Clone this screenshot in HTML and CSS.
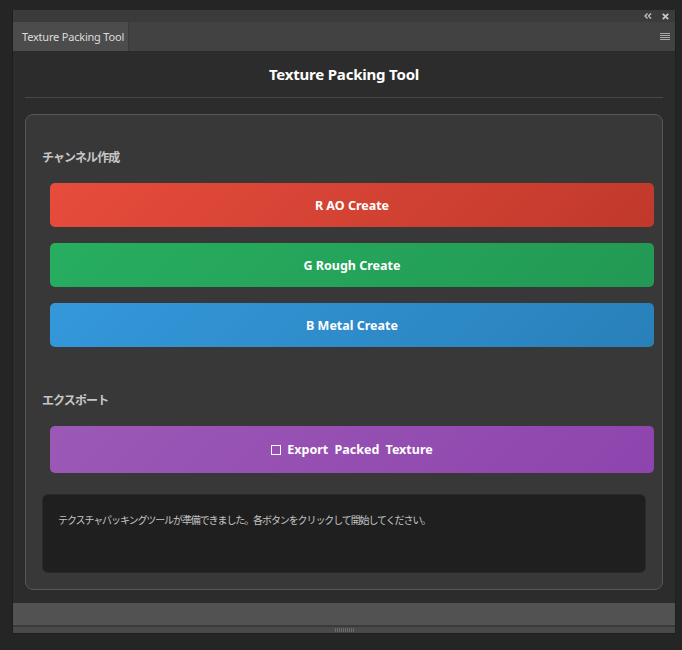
FILE: index.html
```html
<!DOCTYPE html>
<html lang="ja">
<head>
<meta charset="utf-8">
<title>Texture Packing Tool</title>
<link rel="stylesheet" href="styles.css">
</head>
<body>
<div class="panel">
  <div class="topbar">
    <svg class="ico-collapse" width="8" height="6" viewBox="0 0 8 6"><path d="M3.5 0.5 L1 3 L3.5 5.5 M7 0.5 L4.5 3 L7 5.5" fill="none" stroke="#c8c8c8" stroke-width="1.3"/></svg>
    <svg class="ico-close" width="7" height="7" viewBox="0 0 7 7"><path d="M0.8 0.8 L6.2 6.2 M6.2 0.8 L0.8 6.2" fill="none" stroke="#c8c8c8" stroke-width="1.8"/></svg>
  </div>
  <div class="tabrow">
    <div class="tab">Texture Packing Tool</div>
    <svg class="ico-menu" width="10" height="8" viewBox="0 0 10 8"><path d="M0 0.5 H10 M0 2.5 H10 M0 4.5 H10 M0 6.5 H10" stroke="#a8a8a8" stroke-width="1"/></svg>
  </div>
  <div class="content">
    <div class="header">Texture Packing Tool</div>
    <div class="card">
      <div class="section">
        <div class="section-title">チャンネル作成</div>
        <button class="btn btn-red">R AO Create</button>
        <button class="btn btn-green">G Rough Create</button>
        <button class="btn btn-blue">B Metal Create</button>
      </div>
      <div class="section">
        <div class="section-title">エクスポート</div>
        <button class="btn btn-purple btn-export"><span class="box"></span>Export Packed Texture</button>
      </div>
      <div class="log">テクスチャパッキングツールが準備できました。各ボタンをクリックして開始してください。</div>
    </div>
  </div>
  <div class="footer"></div>
  <div class="grip-bar"><span class="grip"></span></div>
</div>
</body>
</html>
```
FILE: styles.css
```css
html, body {
  margin: 0;
  padding: 0;
}
body {
  background: #252525;
  font-family: "Noto Sans", "Noto Sans CJK JP", sans-serif;
  width: 682px;
  height: 650px;
  overflow: hidden;
}
.panel {
  margin: 10px 0 0 12px;
  width: 664px;
  background: #2c2c2c;
  border-left: 1px solid #1e1e1e;
  border-right: 1px solid #1f1f1f;
  box-sizing: border-box;
}
.topbar {
  height: 12px;
  background: #3b3b3b;
  display: flex;
  align-items: center;
  justify-content: flex-end;
  gap: 10px;
  padding-right: 6px;
}
.ico-collapse, .ico-close { display: block; }
.tabrow {
  height: 29px;
  background: #424242;
  display: flex;
  align-items: stretch;
  justify-content: space-between;
  border-bottom: 1px solid #2a2a2a;
}
.tab {
  width: 116px;
  background: #4c4c4c;
  color: #dcdcdc;
  font-size: 11px;
  line-height: 29px;
  padding-left: 9px;
  box-sizing: border-box;
  border-right: 1px solid #3a3a3a;
  letter-spacing: -0.2px;
}
.ico-menu {
  align-self: center;
  margin-right: 5px;
  display: block;
}
.content {
  padding: 0 12px 13px;
  background: #2c2c2c;
}
.header {
  height: 45px;
  line-height: 45px;
  text-align: center;
  color: #ffffff;
  font-weight: bold;
  font-size: 15px;
  border-bottom: 1px solid #474747;
  letter-spacing: -0.2px;
}
.card {
  margin-top: 16px;
  background: #383838;
  border: 1px solid #575757;
  border-radius: 8px;
  padding: 16px;
}
.section + .section { margin-top: 43px; }
.section-title {
  margin: 16px 0;
  height: 20px;
  line-height: 20px;
  color: #c6c6c6;
  font-size: 12px;
  font-weight: 600;
  letter-spacing: -0.9px;
  font-family: "Noto Sans CJK JP", sans-serif;
}
.btn {
  display: flex;
  align-items: center;
  justify-content: center;
  width: 100%;
  margin-left: 8px;
  height: 44px;
  border: none;
  border-radius: 5px;
  color: #ffffff;
  font-family: "Noto Sans", "Noto Sans CJK JP", sans-serif;
  font-weight: bold;
  font-size: 12.5px;
  padding: 0;
}
.btn + .btn { margin-top: 16px; }
.btn-red { background: linear-gradient(135deg, #e74c3c 0%, #c0392b 100%); }
.btn-green { background: linear-gradient(135deg, #27ae60 0%, #229954 100%); }
.btn-blue { background: linear-gradient(135deg, #3498db 0%, #2980b9 100%); }
.btn-purple { background: linear-gradient(135deg, #9b59b6 0%, #8e44ad 100%); }
.btn-export {
  height: 47px;
  word-spacing: 3px;
}
.box {
  display: inline-block;
  width: 8px;
  height: 8px;
  border: 1.5px solid #ffffff;
  margin-right: 6px;
}
.log {
  margin-top: 21px;
  background: #1f1f1f;
  border: 1px solid #2a2a2a;
  border-radius: 6px;
  height: 79px;
  box-sizing: border-box;
  padding: 16px 15px;
  color: #c4c4c4;
  font-size: 10px;
  line-height: 17px;
  letter-spacing: -1.1px;
  font-family: "Noto Sans CJK JP", sans-serif;
}
.footer {
  height: 22px;
  background: #525252;
  border-bottom: 2px solid #3a3a3a;
}
.grip-bar {
  height: 6px;
  background: #4a4a4a;
  display: flex;
  justify-content: center;
  align-items: center;
  border-bottom: 1px solid #1f1f1f;
}
.grip {
  width: 19px;
  height: 4px;
  background: repeating-linear-gradient(90deg, #6a6a6a 0 1px, transparent 1px 2px);
}
```
